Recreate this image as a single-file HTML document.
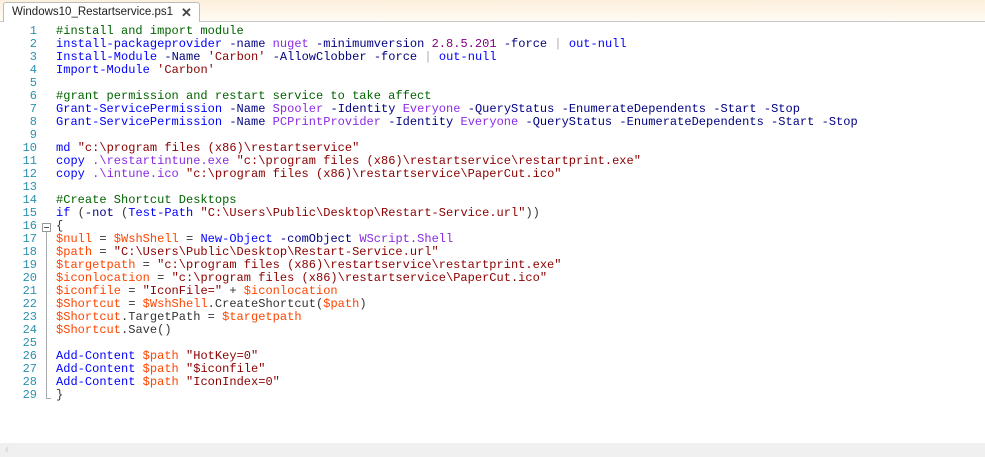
<!DOCTYPE html>
<html><head><meta charset="utf-8"><style>
html,body{margin:0;padding:0;width:985px;height:457px;overflow:hidden;background:#fff;position:relative}
.top{position:absolute;left:0;top:0;width:985px;height:21px;background:linear-gradient(#fdefdc,#fffcf4);border-bottom:1px solid #c8c8c8}
.tab{position:absolute;left:3px;top:2px;width:197px;height:20px;background:#fff;border:1px solid #bcbcbc;border-bottom:none;border-radius:3px 3px 0 0;font:11.5px "Liberation Sans",sans-serif;color:#1e1e1e;line-height:19px;padding-left:8px;box-sizing:border-box}
.tab span{position:absolute;left:177px;top:0;font-size:13px;color:#444;font-weight:bold}
.nums{position:absolute;left:0;top:25px;width:37px;text-align:right;font:12px/13px "Liberation Mono",monospace;color:#2b91af}
.code{position:absolute;left:56px;top:25px;font:12px/13px "Liberation Mono",monospace;color:#333;white-space:pre;letter-spacing:0.02px}
.c{color:#006400}.k{color:#0000ff}.p{color:#000080}.s{color:#8b0000}.a{color:#8a2be2}.v{color:#ff4500}.n{color:#800080}.o{color:#a9a9a9}
.fold{position:absolute;left:42px;top:223px;width:7px;height:7px;border:1px solid #999;background:#fff}
.fold:after{content:"";position:absolute;left:1px;top:3px;width:5px;height:1px;background:#555}
.vl{position:absolute;left:46px;top:232px;width:1px;height:167px;background:#aaa}
.vl2{position:absolute;left:46px;top:398px;width:5px;height:1px;background:#aaa}
.bot{position:absolute;left:0;top:443px;width:985px;height:14px;background:#f0f0f0}
.bot span{position:absolute;left:5px;top:-1px;color:#c8c8c8;font:12px "Liberation Sans",sans-serif}
</style></head><body>
<div class="top"></div>
<div class="tab">Windows10_Restartservice.ps1<span>✕</span></div>
<div class="nums">1<br>2<br>3<br>4<br>5<br>6<br>7<br>8<br>9<br>10<br>11<br>12<br>13<br>14<br>15<br>16<br>17<br>18<br>19<br>20<br>21<br>22<br>23<br>24<br>25<br>26<br>27<br>28<br>29</div>
<div class="fold"></div><div class="vl"></div><div class="vl2"></div>
<div class="code"><span class="c">#install and import module</span>
<span class="k">install-packageprovider</span> <span class="p">-name</span> <span class="a">nuget</span> <span class="p">-minimumversion</span> <span class="n">2.8.5.201</span> <span class="p">-force</span> <span class="o">|</span> <span class="k">out-null</span>
<span class="k">Install-Module</span> <span class="p">-Name</span> <span class="s">'Carbon'</span> <span class="p">-AllowClobber</span> <span class="p">-force</span> <span class="o">|</span> <span class="k">out-null</span>
<span class="k">Import-Module</span> <span class="s">'Carbon'</span>

<span class="c">#grant permission and restart service to take affect</span>
<span class="k">Grant-ServicePermission</span> <span class="p">-Name</span> <span class="a">Spooler</span> <span class="p">-Identity</span> <span class="a">Everyone</span> <span class="p">-QueryStatus</span> <span class="p">-EnumerateDependents</span> <span class="p">-Start</span> <span class="p">-Stop</span>
<span class="k">Grant-ServicePermission</span> <span class="p">-Name</span> <span class="a">PCPrintProvider</span> <span class="p">-Identity</span> <span class="a">Everyone</span> <span class="p">-QueryStatus</span> <span class="p">-EnumerateDependents</span> <span class="p">-Start</span> <span class="p">-Stop</span>

<span class="k">md</span> <span class="s">"c:\program files (x86)\restartservice"</span>
<span class="k">copy</span> <span class="a">.\restartintune.exe</span> <span class="s">"c:\program files (x86)\restartservice\restartprint.exe"</span>
<span class="k">copy</span> <span class="a">.\intune.ico</span> <span class="s">"c:\program files (x86)\restartservice\PaperCut.ico"</span>

<span class="c">#Create Shortcut Desktops</span>
<span class="k">if</span> (<span class="p">-not</span> (<span class="k">Test-Path</span> <span class="s">"C:\Users\Public\Desktop\Restart-Service.url"</span>))
{
<span class="v">$null</span> = <span class="v">$WshShell</span> = <span class="k">New-Object</span> <span class="p">-comObject</span> <span class="a">WScript.Shell</span>
<span class="v">$path</span> = <span class="s">"C:\Users\Public\Desktop\Restart-Service.url"</span>
<span class="v">$targetpath</span> = <span class="s">"c:\program files (x86)\restartservice\restartprint.exe"</span>
<span class="v">$iconlocation</span> = <span class="s">"c:\program files (x86)\restartservice\PaperCut.ico"</span>
<span class="v">$iconfile</span> = <span class="s">"IconFile="</span> + <span class="v">$iconlocation</span>
<span class="v">$Shortcut</span> = <span class="v">$WshShell</span>.CreateShortcut(<span class="v">$path</span>)
<span class="v">$Shortcut</span>.TargetPath = <span class="v">$targetpath</span>
<span class="v">$Shortcut</span>.Save()

<span class="k">Add-Content</span> <span class="v">$path</span> <span class="s">"HotKey=0"</span>
<span class="k">Add-Content</span> <span class="v">$path</span> <span class="s">"$iconfile"</span>
<span class="k">Add-Content</span> <span class="v">$path</span> <span class="s">"IconIndex=0"</span>
}</div>
<div class="bot"><span>‹</span></div>
</body></html>
